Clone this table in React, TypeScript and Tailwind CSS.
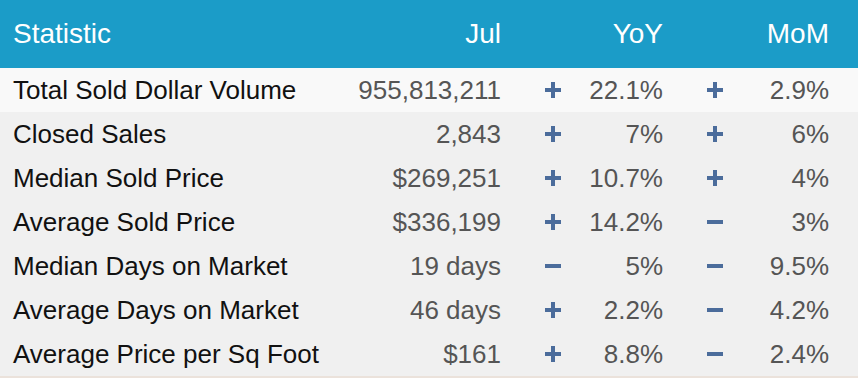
import React from "react";

type Row = {
  label: string;
  value: string;
  yoyUp: boolean;
  yoy: string;
  momUp: boolean;
  mom: string;
};

const rows: Row[] = [
  { label: "Total Sold Dollar Volume", value: "955,813,211", yoyUp: true, yoy: "22.1%", momUp: true, mom: "2.9%" },
  { label: "Closed Sales", value: "2,843", yoyUp: true, yoy: "7%", momUp: true, mom: "6%" },
  { label: "Median Sold Price", value: "$269,251", yoyUp: true, yoy: "10.7%", momUp: true, mom: "4%" },
  { label: "Average Sold Price", value: "$336,199", yoyUp: true, yoy: "14.2%", momUp: false, mom: "3%" },
  { label: "Median Days on Market", value: "19 days", yoyUp: false, yoy: "5%", momUp: false, mom: "9.5%" },
  { label: "Average Days on Market", value: "46 days", yoyUp: true, yoy: "2.2%", momUp: false, mom: "4.2%" },
  { label: "Average Price per Sq Foot", value: "$161", yoyUp: true, yoy: "8.8%", momUp: false, mom: "2.4%" },
];

function Sign({ up }: { up: boolean }) {
  return (
    <svg width="16" height="16" viewBox="0 0 16 16" className="shrink-0">
      <rect x="0" y="6" width="16" height="4" fill="#4b6c9b" />
      {up && <rect x="6" y="0" width="4" height="16" fill="#4b6c9b" />}
    </svg>
  );
}

function Change({ up, text }: { up: boolean; text: string }) {
  return (
    <div className="flex items-center pl-[44px]">
      <Sign up={up} />
      <span className="ml-auto">{text}</span>
    </div>
  );
}

export default function App() {
  return (
    <div
      className="w-[858px] h-[378px] bg-white text-[26px] leading-none"
      style={{ fontFamily: '"Liberation Sans", Arial, sans-serif' }}
    >
      <div className="grid grid-cols-[328px_160px_162px_166px] items-center h-[68px] pl-[13px] pr-[29px] bg-[#1b9cc8] text-white text-[28px]">
        <div>Statistic</div>
        <div className="text-right">Jul</div>
        <div className="text-right">YoY</div>
        <div className="text-right">MoM</div>
      </div>
      <div className="border-b-2 border-[#ebe2db]">
        {rows.map((r, i) => (
          <div
            key={r.label}
            className={`grid grid-cols-[328px_160px_162px_166px] items-center h-[44px] pl-[13px] pr-[29px] ${
              i === 0 ? "bg-[#f9f9f9]" : "bg-[#f0f0f0]"
            }`}
          >
            <div className="text-[#111111] whitespace-nowrap">{r.label}</div>
            <div className="text-right text-[#555555]">{r.value}</div>
            <div className="text-[#555555]">
              <Change up={r.yoyUp} text={r.yoy} />
            </div>
            <div className="text-[#555555]">
              <Change up={r.momUp} text={r.mom} />
            </div>
          </div>
        ))}
      </div>
    </div>
  );
}
